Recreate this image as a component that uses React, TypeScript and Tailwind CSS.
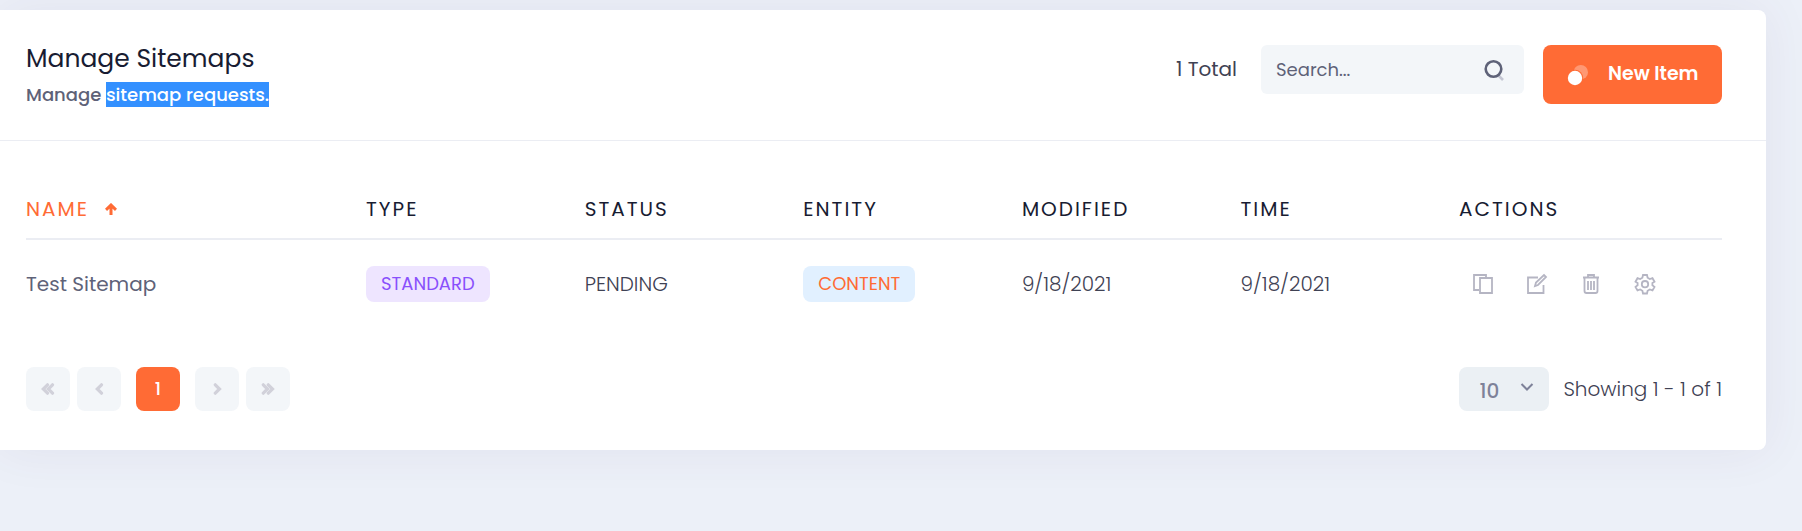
import type { ReactNode } from "react";

const columns = ["Type", "Status", "Entity", "Modified", "Time", "Actions"];

const chevronLeft = "M6.5 1.8 2.3 6l4.2 4.2";
const chevronRight = "M2.3 1.8 6.500 6l-4.200 4.200";

function PageButton({ label, children, active = false }: { label: string; children: ReactNode; active?: boolean }) {
  return (
    <button
      type="button"
      aria-label={label}
      className={
        active
          ? "mx-2 flex size-11 items-center justify-center rounded-lg bg-[#ff6b35] text-lg font-medium text-white"
          : "flex size-11 items-center justify-center rounded-lg bg-[#f3f6f9] text-[#d1d1da]"
      }
    >
      {children}
    </button>
  );
}

function Chevron({ d, double = false }: { d: string; double?: boolean }) {
  return (
    <svg viewBox={double ? "0 0 14 12" : "0 0 9 12"} className={double ? "h-3 w-3.5" : "h-3 w-[9px]"} fill="none" stroke="currentColor" strokeWidth="3.2" strokeLinecap="round" aria-hidden="true">
      <path d={d} />
      {double && <path d={d} transform="translate(5 0)" />}
    </svg>
  );
}

function ActionButton({ label, children }: { label: string; children: ReactNode }) {
  return (
    <button type="button" aria-label={label} className="flex size-6 items-center justify-center text-[#b5b5c3]">
      <svg viewBox="0 0 22 22" className="size-[22px]" fill="none" stroke="currentColor" strokeWidth="1.8" aria-hidden="true">
        {children}
      </svg>
    </button>
  );
}

export default function App() {
  return (
    <div className="min-h-screen bg-[#ecf0f8] pt-2.5 pr-9 pb-20 font-[Poppins,Inter,sans-serif] text-[#3f4254]">
      <main className="rounded-r-lg bg-white shadow-[0_0_50px_0_rgba(82,43,105,0.07)]">
        <header className="flex items-start justify-between border-b border-[#ebedf3] pt-[35px] pr-11 pb-[33px] pl-[26px]">
          <div>
            <h1 className="text-[25px] leading-7 text-[#181c32]">Manage Sitemaps</h1>
            <p className="mt-2.5 text-lg leading-6 font-medium text-[#5e6278]">
              Manage <mark className="bg-[#3390ff] text-white">sitemap requests.</mark>
            </p>
          </div>
          <div className="flex items-start">
            <span className="mr-6 text-xl leading-[49px]">1 Total</span>
            <div className="mr-[19px] flex h-[49px] w-[263px] items-center rounded-md bg-[#f3f6f9] pr-[18px] pl-[15px]">
              <input aria-label="Search" type="text" placeholder="Search..." className="w-full min-w-0 bg-transparent text-lg outline-none placeholder:text-[#5e6278]" />
              <svg viewBox="0 0 24 24" className="size-6 shrink-0" fill="none" aria-hidden="true">
                <path d="m16 17 5 5" stroke="#c4c6d3" strokeWidth="2.6" />
                <circle cx="11.5" cy="11" r="7.800" stroke="#5e6278" strokeWidth="2.6" />
              </svg>
            </div>
            <button type="button" className="flex h-[59px] w-[179px] items-center rounded-lg bg-[#ff6b35] pl-6 text-[19px] font-semibold whitespace-nowrap text-white">
              <svg viewBox="0 0 22 22" className="mr-[19px] size-[22px]" aria-hidden="true">
                <circle cx="13.800" cy="8.200" r="7.200" fill="#ff9873" />
                <circle cx="8" cy="14" r="8.200" fill="#ff6b35" />
                <circle cx="8" cy="14" r="7.200" fill="#fff" />
              </svg>
              New Item
            </button>
          </div>
        </header>
        <section className="pt-[43px] pr-11 pb-[39px] pl-[26px]">
          <table className="w-full table-fixed border-collapse text-left text-xl">
            <colgroup>
              <col className="w-[20.05%]" />
              <col className="w-[12.89%]" />
              <col className="w-[12.89%]" />
              <col className="w-[12.89%]" />
              <col className="w-[12.89%]" />
              <col className="w-[12.89%]" />
              <col className="w-[15.5%]" />
            </colgroup>
            <thead>
              <tr className="h-[55px] border-b-2 border-[#ebedf3] text-[#181c32] uppercase">
                <th className="pb-1 font-normal text-[#ff6b35]">
                  <button type="button" className="flex items-center gap-4 tracking-widest uppercase">
                    Name
                    <svg viewBox="0 0 12 12" className="size-3" fill="none" stroke="currentColor" strokeWidth="3" aria-hidden="true">
                      <path d="M1 6.800 6 2l5 4.800M6 2.500V12" />
                    </svg>
                  </button>
                </th>
                {columns.map((name) => (
                  <th key={name} className="pb-1 font-normal tracking-widest">{name}</th>
                ))}
              </tr>
            </thead>
            <tbody>
              <tr className="h-[88px] font-light">
                <td className="font-normal text-[#5e6278]">Test Sitemap</td>
                <td>
                  <span className="flex h-9 w-fit items-center rounded-lg bg-[#eee5ff] px-[15px] text-lg font-normal text-[#8950fc]">STANDARD</span>
                </td>
                <td>PENDING</td>
                <td>
                  <span className="flex h-9 w-fit items-center rounded-lg bg-[#e1f0ff] px-[15px] text-lg font-normal text-[#ff6b35]">CONTENT</span>
                </td>
                <td>9/18/2021</td>
                <td>9/18/2021</td>
                <td>
                  <div className="flex gap-[30px] pl-3">
                    <ActionButton label="Duplicate">
                      <path d="M7 17H2V2h12v3M8 5h12v15H8z" />
                    </ActionButton>
                    <ActionButton label="Edit">
                      <path d="M12 4.500H2V20h15.500v-8M9 13l1-3.500L18 2l2 2-8 8z" />
                    </ActionButton>
                    <ActionButton label="Delete">
                      <path d="M3 4.500h16M8 4V2h6v2M4.500 5v13q0 2 2 2h9q2 0 2-2V5M8 8v9M11 8v9M14 8v9" />
                    </ActionButton>
                    <ActionButton label="Settings">
                      <path d="M9 2h4l.6 2.800 2.200 1.300 2.700-.9 2 3.500L18.400 10v2.200l2.100 1.700-2 3.500-2.700-.9-2.200 1.300L13 20.500H9l-.6-2.700-2.200-1.300-2.700.9-2-3.500 2.100-1.700V10L1.500 8.700l2-3.500 2.700.9 2.200-1.300z" />
                      <circle cx="11" cy="11.2" r="3.2" />
                    </ActionButton>
                  </div>
                </td>
              </tr>
            </tbody>
          </table>
          <div className="mt-10 flex items-center justify-between text-xl">
            <nav aria-label="Pagination" className="flex gap-[7px]">
              <PageButton label="First page"><Chevron d={chevronLeft} double /></PageButton>
              <PageButton label="Previous page"><Chevron d={chevronLeft} /></PageButton>
              <PageButton label="Page 1" active>1</PageButton>
              <PageButton label="Next page"><Chevron d={chevronRight} /></PageButton>
              <PageButton label="Last page"><Chevron d={chevronRight} double /></PageButton>
            </nav>
            <div className="flex items-center gap-3.5">
              <div className="grid items-center">
                <select aria-label="Items per page" defaultValue="10" className="col-start-1 row-start-1 h-11 w-[90px] appearance-none rounded-lg bg-[#ebf0f4] pt-1 pl-5 font-medium text-[#7e8299]">
                  <option>10</option>
                  <option>20</option>
                  <option>50</option>
                </select>
                <svg viewBox="0 0 14 8" className="pointer-events-none col-start-1 row-start-1 mr-[15px] mb-1 h-2 w-3.5 justify-self-end" fill="none" stroke="#7e8299" strokeWidth="2" aria-hidden="true">
                  <path d="m1.500 1 5.500 5.500L12.500 1" />
                </svg>
              </div>
              <span className="font-light">Showing 1 - 1 of 1</span>
            </div>
          </div>
        </section>
      </main>
    </div>
  );
}
